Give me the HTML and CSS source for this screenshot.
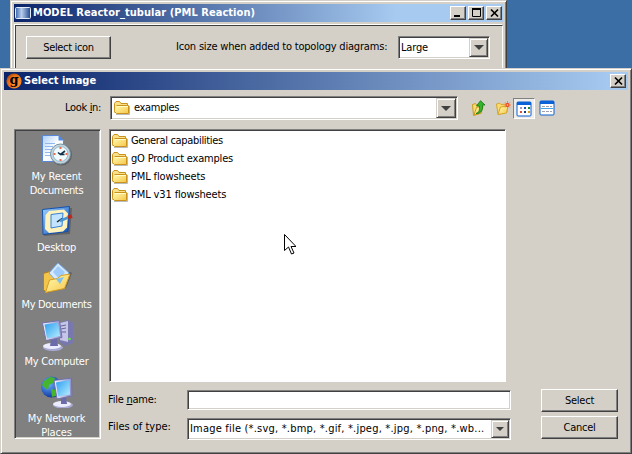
FILE: index.html
```html
<!DOCTYPE html>
<html lang="en">
<head>
<meta charset="utf-8">
<title>Select image</title>
<link rel="stylesheet" href="styles.css">
</head>
<body>
<svg class="defs" aria-hidden="true">
  <defs>
    <linearGradient id="gold" x1="0" y1="0" x2="1" y2="1"><stop offset="0" stop-color="#fffbb4"/><stop offset="1" stop-color="#f6c648"/></linearGradient>
    <linearGradient id="screen" x1="0" y1="0" x2="1" y2="1"><stop offset="0" stop-color="#2b9df0"/><stop offset="1" stop-color="#b8f0ff"/></linearGradient>
    <linearGradient id="steel" x1="0" y1="0" x2="1" y2="0"><stop offset="0" stop-color="#f6f6ff"/><stop offset="1" stop-color="#8c8cc8"/></linearGradient>
    <linearGradient id="paper" x1="0" y1="0" x2="1" y2="1"><stop offset="0" stop-color="#a9cdf8"/><stop offset=".5" stop-color="#fff"/><stop offset="1" stop-color="#cfe4ff"/></linearGradient>
    <linearGradient id="blue" x1="0" y1="0" x2="1" y2="1"><stop offset="0" stop-color="#9fd0ff"/><stop offset="1" stop-color="#0b4fb8"/></linearGradient>
    <linearGradient id="model" x1="0" y1="0" x2="1" y2="0"><stop offset="0" stop-color="#3a66ac"/><stop offset=".4" stop-color="#b8cdea"/><stop offset="1" stop-color="#1c468f"/></linearGradient>
    <radialGradient id="orange" cx=".65" cy=".65" r=".75"><stop offset="0" stop-color="#ff9a3c"/><stop offset=".65" stop-color="#ee7417"/><stop offset="1" stop-color="#9a4208"/></radialGradient>
    <radialGradient id="globe" cx=".35" cy=".35" r=".7"><stop offset="0" stop-color="#6ab4ff"/><stop offset="1" stop-color="#0a2f9c"/></radialGradient>
    <symbol id="folder" viewBox="0 0 16 14">
      <path d="M2 13.5H15.5V5" fill="none" stroke="#8d8d8d" opacity=".6"/>
      <path d="M.5 11.5V2.5L2 .5H5.5L7 2.5H13.5V5" fill="#fbe08a" stroke="#c8921c"/>
      <path d="M2.5 4.5H14.5V12.5H2.5L.5 10.5" fill="url(#gold)" stroke="#c8921c"/>
      <path d="M3 5.5H14" stroke="#fffcc8"/>
    </symbol>
  </defs>
</svg>

<section class="window model-window">
  <header class="titlebar">
    <svg class="model-icon" viewBox="0 0 16 12"><rect x=".5" y=".5" width="15" height="11" rx="1" fill="url(#model)" stroke="#e4ecf8"/></svg>
    <h1 class="t-model">MODEL Reactor_tubular (PML Reaction)</h1>
    <button class="caption"><svg viewBox="0 0 12 10"><path d="M1 8h6" stroke="#000" stroke-width="2"/></svg></button>
    <button class="caption gap"><svg viewBox="0 0 12 10"><path d="M1.500 1v7.500h8V1" fill="none" stroke="#000"/><path d="M1 1h9" stroke="#000" stroke-width="2"/></svg></button>
    <button class="caption gap"><svg viewBox="0 0 12 10"><path d="M2 1.500l7 7M9 1.500l-7 7" stroke="#000" stroke-width="1.700"/></svg></button>
  </header>
  <div class="model-panel">
    <button class="button icon-button"><span class="tight">Select icon</span></button>
    <label class="size-label snug">Icon size when added to topology diagrams:</label>
    <div class="combo size-combo"><span class="snug">Large</span><button class="drop"></button></div>
  </div>
</section>

<section class="window dialog">
  <header class="titlebar">
    <svg class="g-icon" viewBox="0 0 16 16"><circle cx="8" cy="8" r="7.600" fill="url(#orange)"/><text x="8" y="10.800" text-anchor="middle" class="g-letter">g</text></svg>
    <h1>Select image</h1>
    <button class="caption"><svg viewBox="0 0 12 10"><path d="M2 1.500l7 7M9 1.500l-7 7" stroke="#000" stroke-width="1.700"/></svg></button>
  </header>

  <div class="look-row">
    <label class="look-label tight">Look <u>i</u>n:</label>
    <div class="combo look-combo"><svg class="folder"><use href="#folder"/></svg><span class="tight">examples</span><button class="drop"></button></div>
    <nav class="tools">
      <svg class="tool" viewBox="0 0 16 16"><path d="M1.500 4.500l3-1 1 1.500 5-1v9l-8 2.500z" fill="#f9dc70" stroke="#c99a1c"/><path d="M3 15l2.500-7.500L12 6l-2 7z" fill="url(#gold)" stroke="#c99a1c"/><path d="M5 13.500c3.500-1 3.800-4 3.300-7.500H5.500L9.500.700 14 5h-2.500c.600 4.500-1 8.500-6.500 8.500z" fill="#35b52d" stroke="#13730f" stroke-width=".8"/></svg>
      <svg class="tool" viewBox="0 0 16 16"><path d="M1.500 4l3-1 1.500 1.500 6-.5v8L3 14.500z" fill="#f9dc70" stroke="#d4a52b"/><path d="M3 14.500l2.500-7.500 7.500-1-1.500 7z" fill="url(#gold)" stroke="#d4a52b"/><path d="M12.500 1v8M8.500 5h8M10 2.300l5 5.200M15 2.300l-5 5.200" stroke="#f08a4a"/><circle cx="12.500" cy="5" r="2" fill="#e8412a"/><circle cx="12.500" cy="5" r=".9" fill="#ffc04a"/></svg>
      <span class="tool-pressed"><svg class="tool" viewBox="0 0 16 16"><rect x="1" y="1" width="14" height="14" rx="1" fill="#fff" stroke="#0a5fd0"/><path d="M1 2.500h14" stroke="#0a62d8" stroke-width="3"/><path d="M4 6h2v2H4z" fill="#9a9ac8"/><path d="M8 6h2v2H8z" fill="#1656b8"/><path d="M12 6h2v2h-2z" fill="#208a28"/><path d="M4 10h2v2H4z" fill="#d45040"/><path d="M8 10h2v2H8z" fill="#123f80"/><path d="M12 10h2v2h-2z" fill="#d8a020"/></svg></span>
      <svg class="tool" viewBox="0 0 16 16"><rect x="1" y="1" width="14" height="14" rx="1" fill="#fff" stroke="#0a5fd0"/><path d="M1 2.500h14" stroke="#0a62d8" stroke-width="3"/><path d="M3 6.500h10M3 11.500h10" stroke="#a0a0b0" stroke-dasharray="3 1"/><path d="M2 8.500h12" stroke="#45a4e8"/></svg>
    </nav>
  </div>

  <div class="body">
    <aside class="places">
      <a class="place">
        <svg viewBox="0 0 32 32"><path d="M3 2h15l5 5v21H3z" fill="#555" opacity=".5"/><path d="M1.500 1.500h16l5 5v21h-21z" fill="url(#paper)" stroke="#5a86d8"/><path d="M17.500 1.500v5h5z" fill="#4c8ce8"/><path d="M4 9.500h10M4 12.500h8M4 15.500h7M4 18.500h6M4 21.500h7" stroke="#8fb8ee"/><circle cx="20.500" cy="21" r="10.500" fill="#444" opacity=".5"/><circle cx="19.500" cy="20" r="10" fill="#c4d5df" stroke="#7893a2"/><circle cx="19.500" cy="20" r="7.500" fill="#f0fbff" stroke="#95b8c8"/><path d="M19.500 13v2M19.500 25v2M12.500 20h2M24.500 20h2" stroke="#ec6a4c" stroke-width="2"/><path d="M24 17l-4.500 3.500L17 18.500M19.500 20.500h4" fill="none" stroke="#123048" stroke-width="1.600"/></svg>
        <span class="snug">My Recent</span>
        <span class="tight">Documents</span>
      </a>
      <a class="place">
        <svg viewBox="0 0 32 32"><path d="M3 6l28-3-2 26-26 2z" fill="#444" opacity=".5"/><path d="M1.500 4.500l27-3-1.500 25-25 3z" fill="url(#blue)" stroke="#1551ac"/><path d="M8 6l15-1.500 4 4-1 14-4 4-14 1.500-4-4 .500-14z" fill="#fff2bd"/><path d="M10 9.500l12-1.500-1 13-11 2z" fill="#c2e4ff" stroke="#3483d6"/><path d="M16 17l5-3.500" stroke="#222" stroke-width="1.500"/><path d="M19 16l8-3.500" stroke="#4a96d4" stroke-width="2.500"/><path d="M27 12.500l4-1.500" stroke="#ba2a1c" stroke-width="3.500"/></svg>
        <span class="close">Desktop</span>
      </a>
      <a class="place">
        <svg viewBox="0 0 32 32"><path d="M5 31l20-5 6-15-2-1-24 17z" fill="#444" opacity=".55"/><path d="M2.500 11.500l6-2 3 2 12-1v11l-18 9-3-3z" fill="#f3c54b" stroke="#b58118"/><path d="M8 11L17 1l11 10-9 12z" fill="#d5eaff" stroke="#77a9e4"/><path d="M12 10l5-6 7 6-5 8z" fill="#9ecbfb"/><path d="M4.500 30.500L8.500 18l8-1.500 3.500-3 9-1.500-5.500 14.500z" fill="url(#gold)" stroke="#d39d24"/><path d="M15 17l4 5 4-7z" fill="#7fc0ee"/></svg>
        <span class="tight">My Documents</span>
      </a>
      <a class="place">
        <svg viewBox="0 0 32 32"><path d="M18 4l9-3 5 3v20l-8 3-6-4z" fill="#7878ae"/><path d="M19 4l8-2v21l-8-2z" fill="#c5c5e8"/><path d="M20 7l5-1M20 10l5-1M20 13h5" stroke="#65659b"/><circle cx="28.500" cy="20" r="1.300" fill="#65e83a"/><ellipse cx="12" cy="28.500" rx="10" ry="3.500" fill="#a9a9d6"/><ellipse cx="11" cy="27" rx="9" ry="3" fill="#ececff"/><path d="M10 20h6l1 7H9z" fill="#6b6bac"/><path d="M1.500 4L18.500 1.500 21 18.500 5 21.500z" fill="url(#steel)" stroke="#7272ac"/><path d="M3.500 5.500l13.500-2 2 13.500L6 19.500z" fill="url(#screen)"/></svg>
        <span class="close">My Computer</span>
      </a>
      <a class="place">
        <svg viewBox="0 0 32 32"><circle cx="10.500" cy="11" r="10.500" fill="url(#globe)"/><path d="M3 5l6-4 5 1-2 5-4 2-1 5-4-3-2-2zM10 13l6 1-1 6-4 1z" fill="#45b52c"/><ellipse cx="22" cy="29" rx="10" ry="3.500" fill="#a9a9d6"/><ellipse cx="21" cy="28" rx="9" ry="3" fill="#ececff"/><path d="M20 21h5l1 7h-6z" fill="#6b6bac"/><path d="M13 4.500L30.500 2l.500 18-15 3z" fill="url(#steel)" stroke="#7272ac"/><path d="M15 6.500L28.500 4l.500 14.500-12 2z" fill="url(#screen)"/></svg>
        <span class="near">My Network</span>
        <span class="near">Places</span>
      </a>
    </aside>

    <main class="main">
      <ul class="files">
        <li><svg class="folder"><use href="#folder"/></svg><span class="tight">General capabilities</span></li>
        <li><svg class="folder"><use href="#folder"/></svg><span class="snug">gO Product examples</span></li>
        <li><svg class="folder"><use href="#folder"/></svg><span class="near">PML flowsheets</span></li>
        <li><svg class="folder"><use href="#folder"/></svg><span class="near">PML v31 flowsheets</span></li>
      </ul>
      <div class="form-row">
        <label class="close">File <u>n</u>ame:</label>
        <div class="field"></div>
        <button class="button action"><span class="close">Select</span></button>
      </div>
      <div class="form-row type-row">
        <label>Files of <u>t</u>ype:</label>
        <div class="combo type-combo"><span class="wide">Image file (*.svg, *.bmp, *.gif, *.jpeg, *.jpg, *.png, *.wb...</span><button class="drop"></button></div>
        <button class="button action"><span class="close">Cancel</span></button>
      </div>
    </main>
  </div>
</section>

<svg class="cursor" viewBox="0 0 12 21"><path d="M.5.500v16l4-3.500 3 7 2.500-1-3-6.500h5z" fill="#fff" stroke="#000"/></svg>
</body>
</html>
```

FILE: styles.css
```css
* { box-sizing: border-box; }

body {
  margin: 0;
  width: 632px;
  height: 454px;
  overflow: hidden;
  position: relative;
  background: #3a6ea5;
  color: #000;
  font: 11px/14px "DejaVu Sans Condensed", "DejaVu Sans", sans-serif;
  font-stretch: condensed;
  white-space: nowrap;
}

.defs { position: absolute; width: 0; height: 0; }

button { font: inherit; color: inherit; padding: 0; margin: 0; border: 0; border-radius: 0; }

/* Letter fitting */
.tight { letter-spacing: -.33px; }
.close { letter-spacing: -.25px; }
.snug { letter-spacing: -.19px; }
.near { letter-spacing: -.14px; }
.wide { letter-spacing: .2px; }
.t-model { letter-spacing: .05px; }

.window {
  position: absolute;
  background: #d4d0c8;
  border: 1px solid;
  border-color: #d4d0c8 #404040 #404040 #d4d0c8;
  box-shadow: inset 1px 1px #fff, inset -1px -1px #808080;
  padding: 3px;
}
.model-window { left: 10px; top: 0; width: 497px; height: 90px; }
.dialog { left: 0; top: 68px; width: 632px; height: 386px; }

.titlebar {
  display: flex;
  align-items: center;
  height: 18px;
  padding-right: 2px;
  background: linear-gradient(90deg, #0a246a, #a6caf0 98%);
}
.model-window .titlebar { padding-right: 1px; background: linear-gradient(90deg, #0a246a, #a6caf0 78%); }
.titlebar h1 { flex: 1; margin: 0; font-size: 11px; line-height: 18px; font-weight: bold; color: #fff; }
.model-icon { width: 16px; height: 12px; margin: 0 2px 0 1px; }
.g-icon { width: 16px; height: 16px; margin: 0 2px 0 2px; }
.g-letter { font: bold 13px "DejaVu Serif", serif; }

.caption {
  width: 16px;
  height: 14px;
  padding: 1px 2px;
  background: #d4d0c8;
  border: 1px solid;
  border-color: #fff #404040 #404040 #fff;
  box-shadow: inset -1px -1px #808080;
}
.caption svg { display: block; width: 12px; height: 10px; }
.gap { margin-left: 2px; }

.button {
  background: #d4d0c8;
  border: 1px solid;
  border-color: #fff #404040 #404040 #fff;
  box-shadow: inset -1px -1px #808080;
}

.combo, .field {
  display: flex;
  align-items: center;
  background: #fff;
  border: 1px solid;
  border-color: #808080 #fff #fff #808080;
  box-shadow: inset 1px 1px #404040, inset -1px -1px #d4d0c8;
}
.drop {
  display: grid;
  place-items: center;
  margin-left: auto;
  width: 19px;
  background: #d4d0c8;
  border: 1px solid;
  border-color: #d4d0c8 #404040 #404040 #d4d0c8;
  box-shadow: inset 1px 1px #fff, inset -1px -1px #808080;
}
.drop::before {
  content: "";
  border: solid transparent;
  border-width: 5px 5px 0;
  border-top-color: #404040;
}

.model-panel {
  display: flex;
  align-items: flex-start;
  margin: 3px 0 0 1px;
  height: 64px;
  padding: 10px 8px 0 10px;
  border: 1px solid;
  border-color: #404040 #fff #fff #404040;
  box-shadow: -1px -1px #fff;
}
.icon-button { width: 85px; height: 23px; }
.size-label { margin: 4px 0 0 65px; width: 213px; }
.size-combo { width: 92px; height: 23px; margin-left: 9px; padding: 2px 1px 2px 2px; }
.size-combo .drop { height: 19px; }

.look-row { display: flex; height: 25px; margin-top: 6px; }
.look-label { width: 106px; padding: 5px 9px 0 0; text-align: right; }
.look-combo { width: 348px; height: 24px; padding: 1px; }
.look-combo .folder { margin: 0 4px 0 2px; }
.look-combo .drop { width: 20px; height: 20px; }
.folder { width: 16px; height: 14px; flex: none; }

.tools { display: flex; align-items: center; height: 24px; margin-left: 13px; }
.tool { width: 16px; height: 16px; display: block; }
.tool + .tool { margin-left: 8px; }
.tool-pressed {
  width: 22px;
  height: 21px;
  margin: 0 4px 0 2px;
  padding: 2px;
  background: #efede9;
  border: 1px solid;
  border-color: #808080 #fff #fff #808080;
}

.body { display: flex; margin: 8px 0 0 10px; }
.places {
  width: 87px;
  height: 310px;
  overflow: hidden;
  padding: 4px 2px 0 0;
  background: #808080;
  color: #fff;
  text-align: center;
  border: 1px solid;
  border-color: #808080 #fff #fff #808080;
  box-shadow: inset 1px 1px #404040, inset -1px -1px #d4d0c8;
}
.place { display: block; padding-bottom: 7px; }
.place svg { display: block; width: 32px; height: 32px; margin: 0 auto 4px; }
.place > span { display: block; }

.main { margin-left: 8px; width: 509px; }
.files {
  margin: 0;
  width: 397px;
  height: 253px;
  padding: 2px 2px;
  list-style: none;
  background: #fff;
  border: 1px solid;
  border-color: #808080 #fff #fff #808080;
  box-shadow: inset 1px 1px #404040;
}
.files li { display: flex; align-items: center; gap: 3px; height: 18px; }

.form-row { display: flex; height: 23px; margin-top: 7px; }
.type-row { margin-top: 4px; }
.form-row label { width: 79px; margin-left: -1px; padding-top: 4px; }
.field { height: 20px; margin-top: 1px; width: 324px; }
.type-combo { height: 22px; margin-top: 2px; width: 324px; padding: 2px 1px 2px 2px; }
.type-combo .drop { width: 18px; height: 18px; }
.type-combo .drop::before { border-width: 4px 4px 0; }
.action { width: 77px; height: 23px; margin-left: 30px; }

.cursor { position: absolute; left: 284px; top: 234px; width: 12px; height: 21px; }
```
